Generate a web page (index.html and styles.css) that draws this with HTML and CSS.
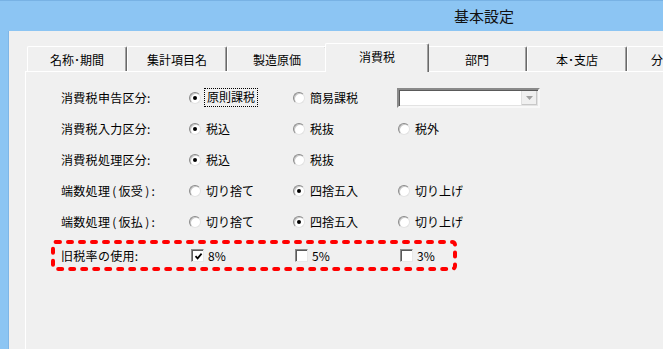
FILE: index.html
```html
<!DOCTYPE html>
<html lang="ja">
<head>
<meta charset="utf-8">
<title>基本設定</title>
<link rel="stylesheet" href="styles.css">
</head>
<body>
<div class="window">
  <div class="titlebar"><span class="title">基本設定</span></div>
  <div class="client">
    <div class="tabs">
      <div class="tab">名称･期間</div>
      <div class="tab">集計項目名</div>
      <div class="tab">製造原価</div>
      <div class="tab selected">消費税</div>
      <div class="tab">部門</div>
      <div class="tab">本･支店</div>
      <div class="tab last">分</div>
    </div>
    <div class="panel">
      <div class="form">
        <div class="row">
          <span class="label">消費税申告区分:</span>
          <span class="opt"><span class="radio on"></span><span class="focus">原則課税</span></span>
          <span class="opt col2"><span class="radio"></span>簡易課税</span>
          <span class="combo"><span class="combo-btn"><svg width="7" height="4" viewBox="0 0 7 4"><path d="M0 0H7L3.5 4Z" fill="#a0a0a0"/></svg></span></span>
        </div>
        <div class="row">
          <span class="label">消費税入力区分:</span>
          <span class="opt"><span class="radio on"></span>税込</span>
          <span class="opt col2"><span class="radio"></span>税抜</span>
          <span class="opt col3"><span class="radio"></span>税外</span>
        </div>
        <div class="row">
          <span class="label">消費税処理区分:</span>
          <span class="opt"><span class="radio on"></span>税込</span>
          <span class="opt col2"><span class="radio"></span>税抜</span>
        </div>
        <div class="row">
          <span class="label">端数処理<span class="paren">(</span>仮受<span class="paren">)</span>:</span>
          <span class="opt"><span class="radio"></span>切り捨て</span>
          <span class="opt col2"><span class="radio on"></span>四捨五入</span>
          <span class="opt col3"><span class="radio"></span>切り上げ</span>
        </div>
        <div class="row">
          <span class="label">端数処理<span class="paren">(</span>仮払<span class="paren">)</span>:</span>
          <span class="opt"><span class="radio"></span>切り捨て</span>
          <span class="opt col2"><span class="radio on"></span>四捨五入</span>
          <span class="opt col3"><span class="radio"></span>切り上げ</span>
        </div>
        <div class="row old-rate">
          <svg class="highlight" width="406" height="31" viewBox="0 0 406 31"><rect x="2" y="2" width="402" height="27" rx="3" fill="none" stroke="#ff0000" stroke-width="4" stroke-dasharray="4 8" stroke-linecap="round"/></svg>
          <span class="label">旧税率の使用:</span>
          <span class="chk-opt"><span class="check on"><svg width="9" height="9" viewBox="0 0 9 9"><path d="M1.5 4.2L3.6 6.4L7.6 1.6" fill="none" stroke="#000" stroke-width="1.7"/></svg></span>8%</span>
          <span class="chk-opt col2"><span class="check"></span>5%</span>
          <span class="chk-opt col3"><span class="check"></span>3%</span>
        </div>
      </div>
    </div>
  </div>
</div>
</body>
</html>
```
FILE: styles.css
```css
html, body {
  margin: 0;
  padding: 0;
  width: 663px;
  height: 349px;
  overflow: hidden;
  background: #8cc5f3;
}

.window {
  width: 968px;
  height: 349px;
  display: flex;
  flex-direction: column;
  font-family: "Noto Sans CJK JP", "Noto Sans", sans-serif;
  font-size: 12px;
  color: #000;
  background: #8cc5f3;
  border-top: 1px solid #78b2e4;
  box-sizing: border-box;
}

.titlebar {
  height: 30px;
  flex-shrink: 0;
  display: flex;
  align-items: center;
  justify-content: center;
  padding-bottom: 1px;
  box-sizing: border-box;
}

.title {
  font-size: 15px;
  line-height: 1;
  color: #111;
}

.client {
  flex: 1;
  margin-left: 8px;
  background: #f0f0f0;
  padding: 12px 0 0 16px;
  display: flex;
  flex-direction: column;
  border-left: 1px solid #7fb6e6;
}

.tabs {
  display: flex;
  align-items: flex-end;
  height: 28px;
  padding-left: 2px;
  flex-shrink: 0;
}

.tab {
  width: 100px;
  height: 25px;
  flex-shrink: 0;
  box-sizing: border-box;
  border-top: 1px solid #fff;
  border-left: 1px solid #fff;
  border-right: 1px solid #696969;
  box-shadow: inset -1px 0 #a0a0a0;
  border-radius: 2px 2px 0 0;
  display: flex;
  align-items: center;
  justify-content: center;
  line-height: 1;
  background: #f0f0f0;
  padding-top: 1px;
}

.tab.last {
  justify-content: flex-start;
  padding-left: 23px;
}

.tab.selected {
  width: 104px;
  height: 29px;
  margin: 0 -2px -1px;
  position: relative;
  z-index: 1;
  padding-top: 0;
  padding-bottom: 3px;
}

.panel {
  flex: 1;
  border-top: 1px solid #fff;
  border-left: 1px solid #fff;
  background: #f0f0f0;
}

.form {
  padding: 10px 0 0 35px;
}

.row {
  display: grid;
  grid-template-columns: 128px 104px 105px 160px;
  align-items: center;
  height: 31px;
  line-height: 1;
}

.row.old-rate {
  margin-top: 3px;
  position: relative;
}

.highlight {
  position: absolute;
  left: -10px;
  top: 0;
}

.label {
  white-space: nowrap;
  letter-spacing: 0.3px;
}

.paren {
  margin: 0 2px;
}

.opt, .chk-opt {
  display: flex;
  align-items: center;
  white-space: nowrap;
}

.col2 { grid-column: 3; }
.col3 { grid-column: 4; }

.radio {
  width: 12px;
  height: 12px;
  box-sizing: border-box;
  border-radius: 50%;
  border: 1px solid;
  border-color: #8a8a8a #e2e2e2 #e2e2e2 #8a8a8a;
  background: #fff;
  box-shadow: inset 1px 1px #c8c8c8;
  margin-right: 5px;
  position: relative;
  flex-shrink: 0;
}

.radio.on::after {
  content: "";
  position: absolute;
  left: 3px;
  top: 3px;
  width: 4px;
  height: 4px;
  border-radius: 50%;
  background: #000;
}

.focus {
  outline: 1px dotted #000;
  outline-offset: 1px;
  padding: 1px 1px 2px;
}

.combo {
  margin-left: -1px;
  width: 143px;
  height: 20px;
  box-sizing: border-box;
  border: 2px solid;
  border-color: #8a8a8a #f8f8f8 #f8f8f8 #8a8a8a;
  box-shadow: inset 1px 1px #5a5a5a, inset -1px -1px #e3e3e3;
  background: #fff;
  display: flex;
  justify-content: flex-end;
  align-items: stretch;
  padding: 1px;
}

.combo-btn {
  width: 15px;
  background: #f0f0f0;
  border-left: 1px solid #e0e0e0;
  box-shadow: inset -1px -1px #c8c8c8;
  display: flex;
  align-items: center;
  justify-content: center;
}

.chk-opt {
  padding-left: 2px;
}

.check {
  width: 13px;
  height: 13px;
  box-sizing: border-box;
  border: 1px solid;
  border-color: #8a8a8a #e8e8e8 #e8e8e8 #8a8a8a;
  box-shadow: inset 1px 1px #5a5a5a;
  background: #fff;
  margin-right: 4px;
  display: flex;
  align-items: center;
  justify-content: center;
  padding: 1px 0 0 1px;
  flex-shrink: 0;
}
```
